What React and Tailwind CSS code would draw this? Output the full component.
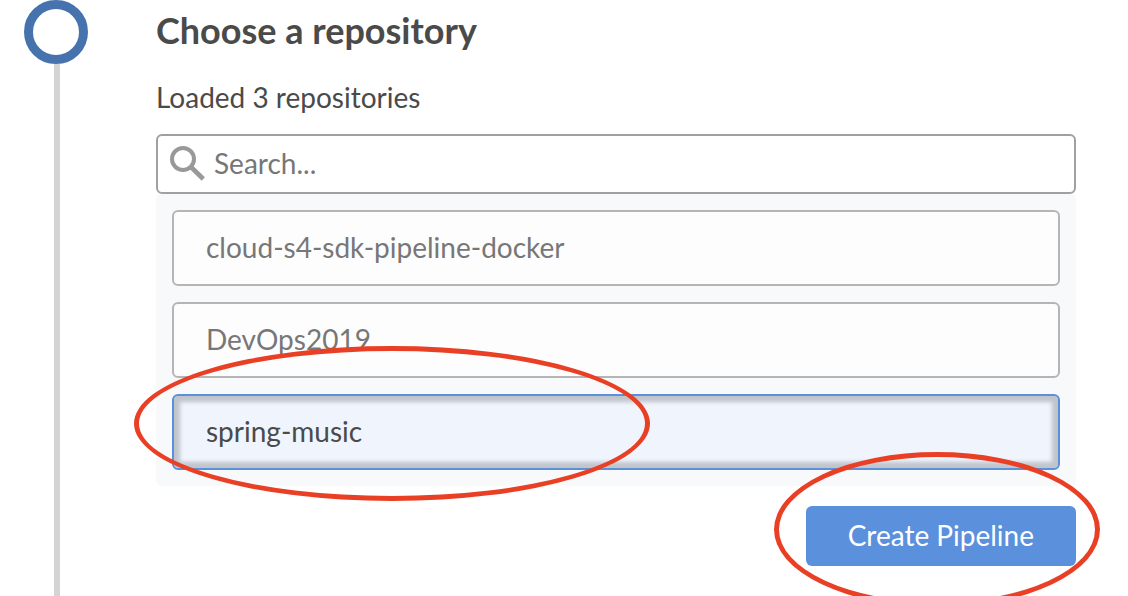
import { useState } from "react";

const repositories = ["cloud-s4-sdk-pipeline-docker", "DevOps2019", "spring-music"];

function SearchIcon({ className }) {
  return (
    <svg viewBox="0 0 36 36" fill="none" stroke="#999999" className={className} aria-hidden="true">
      <circle cx="13" cy="14" r="11" strokeWidth="4" />
      <path d="M21.5 22.5 33.3 34" strokeWidth="4.6" />
    </svg>
  );
}

function StepRail() {
  return (
    <div className="flex w-16 shrink-0 flex-col items-center">
      <div className="size-16 shrink-0 rounded-full border-9 border-[#4672ae]" />
      <div className="ml-0.5 w-1.5 grow bg-[#d4d4d4]" />
    </div>
  );
}

function Highlight({ className }) {
  return (
    <span
      className={`pointer-events-none absolute z-10 rounded-[50%] border-5 border-[#e94025] ${className}`}
      aria-hidden="true"
    />
  );
}

function RepositoryItem({ name, selected, onSelect, children }) {
  return (
    <li className="relative">
      <button
        type="button"
        aria-pressed={selected}
        onClick={onSelect}
        className={`block h-19 w-full rounded-md border-2 px-8 pb-0.5 text-left ${
          selected
            ? "border-[#5a90dc] bg-[#eff4fd] text-[#4a4a4a] shadow-[inset_0_0_4px_6px_rgba(0,0,0,0.2)]"
            : "border-[#b5b5b5] bg-[#fdfdfd] text-[#777777]"
        }`}
      >
        {name}
      </button>
      {children}
    </li>
  );
}

export default function App() {
  const [selected, setSelected] = useState("spring-music");
  const [query, setQuery] = useState("");
  const visible = repositories.filter((name) => name.toLowerCase().includes(query.toLowerCase()));

  return (
    <main className="flex h-screen gap-17 overflow-hidden bg-white pr-13 pl-6 font-['Lato',sans-serif] text-[28px] leading-9 text-[#4a4a4a]">
      <StepRail />
      <section className="min-w-0 flex-1">
        <h1 className="text-4xl leading-15 font-bold">Choose a repository</h1>
        <p className="py-[19px]">Loaded 3 repositories</p>
        <label
          htmlFor="repository-search"
          className="flex h-15 items-center gap-2 rounded-md border-2 border-[#a0a0a0] bg-white px-3 pb-0.5"
        >
          <SearchIcon className="size-9 shrink-0" />
          <input
            id="repository-search"
            type="text"
            aria-label="Search repositories"
            value={query}
            onChange={(event) => setQuery(event.target.value)}
            placeholder="Search..."
            className="min-w-0 flex-1 bg-transparent outline-none placeholder:text-[#777777]"
          />
        </label>
        <ul className="flex flex-col gap-4 rounded-md bg-[#f8f9fb] p-4">
          {visible.map((name) => (
            <RepositoryItem
              key={name}
              name={name}
              selected={name === selected}
              onSelect={() => setSelected(name)}
            >
              {name === "spring-music" && <Highlight className="-top-12 -left-9.5 h-[155px] w-129" />}
            </RepositoryItem>
          ))}
        </ul>
        <div className="mt-5 flex justify-end">
          <div className="relative">
            <button type="button" className="h-15 rounded-md bg-[#5a90dc] px-10.5 pb-0.5 text-white">
              Create Pipeline
            </button>
            <Highlight className="-top-13.5 -left-8 h-[155px] w-[326px]" />
          </div>
        </div>
      </section>
    </main>
  );
}
